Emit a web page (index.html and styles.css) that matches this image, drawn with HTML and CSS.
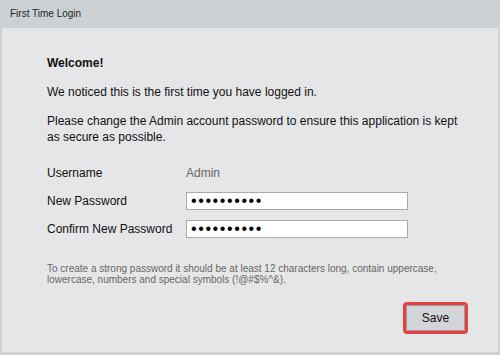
FILE: index.html
```html
<!DOCTYPE html>
<html lang="en">
<head>
  <meta charset="UTF-8" />
  <title>First Time Login</title>
  <link rel="stylesheet" href="styles.css">
</head>
<body>
  <div class="dialog">
    <div class="titlebar">First Time Login</div>

    <div class="panel">
      <p class="welcome">Welcome!</p>
      <p class="notice">We noticed this is the first time you have logged in.</p>
      <p class="notice">Please change the Admin account password to ensure this application is kept as secure as possible.</p>

      <!-- Account fields -->
      <div class="fields">
        <label>Username</label>
        <span class="value">Admin</span>
        <label for="newPassword">New Password</label>
        <input type="password" id="newPassword" value="abcdefghij" />
        <label for="confirmPassword">Confirm New Password</label>
        <input type="password" id="confirmPassword" value="abcdefghij" />
      </div>

      <p class="hint">To create a strong password it should be at least 12 characters long, contain uppercase, lowercase, numbers and special symbols (!@#$%^&amp;).</p>

      <div class="actions">
        <button class="save">Save</button>
      </div>
    </div>
  </div>
</body>
</html>
```

FILE: styles.css
```css
body {
  margin: 0;
  font-family: "Liberation Sans", Arial, sans-serif;
  color: #111;
  background-color: #cdd1d4;
}

.dialog {
  width: 500px;
  height: 355px;
  padding: 0 2px 3px;
  box-sizing: border-box;
  display: flex;
  flex-direction: column;
}

.titlebar {
  height: 28px;
  line-height: 27px;
  padding-left: 8px;
  font-size: 10px;
  color: #222;
}

.panel {
  flex: 1;
  background-color: #e5e6e8;
  padding: 27px 30px 0 45px;
  font-size: 12px;
  line-height: 16px;
}

.panel p {
  margin: 0 0 13px;
}

.welcome {
  font-weight: bold;
}

.fields {
  display: grid;
  grid-template-columns: 139px 222px;
  grid-auto-rows: 28px;
  align-items: center;
  margin-top: 14px;
}

.value {
  color: #666;
}

.fields input {
  height: 18px;
  box-sizing: border-box;
  border: 1px solid #aaa;
  background: #fff;
  padding: 0 4px;
  font-size: 16px;
  letter-spacing: 1.6px;
}

.panel .hint {
  margin-top: 20px;
  font-size: 10px;
  line-height: 11px;
  color: #666;
}

.actions {
  display: flex;
  justify-content: flex-end;
  margin-top: 17px;
}

.save {
  width: 65px;
  height: 32px;
  border: 3px solid #e8403f;
  border-radius: 4px;
  background-color: #d3d4d8;
  box-shadow: inset 0 0 0 1px #9a9ca0;
  font-family: inherit;
  font-size: 12px;
  color: #111;
  cursor: pointer;
}
```
